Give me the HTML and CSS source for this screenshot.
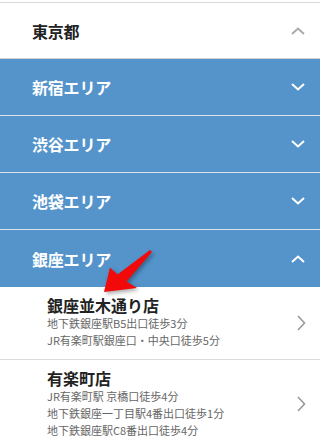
FILE: index.html
```html
<!DOCTYPE html>
<html lang="ja">
<head>
<meta charset="utf-8">
<link rel="stylesheet" href="styles.css">
</head>
<body>
<div class="page">
  <div class="pref">
    <span class="label">東京都</span>
    <svg class="chev up gray" viewBox="0 0 14 8"><path d="M1 7 L7 1.5 L13 7"/></svg>
  </div>
  <div class="area">
    <span class="label">新宿エリア</span>
    <svg class="chev" viewBox="0 0 14 8"><path d="M1 1 L7 6.5 L13 1"/></svg>
  </div>
  <div class="area">
    <span class="label">渋谷エリア</span>
    <svg class="chev" viewBox="0 0 14 8"><path d="M1 1 L7 6.5 L13 1"/></svg>
  </div>
  <div class="area">
    <span class="label">池袋エリア</span>
    <svg class="chev" viewBox="0 0 14 8"><path d="M1 1 L7 6.5 L13 1"/></svg>
  </div>
  <div class="area open">
    <span class="label">銀座エリア</span>
    <svg class="chev" viewBox="0 0 14 8"><path d="M1 7 L7 1.5 L13 7"/></svg>
  </div>
  <div class="shop">
    <div class="info">
      <div class="name">銀座並木通り店</div>
      <div class="access">地下鉄銀座駅B5出口徒歩3分</div>
      <div class="access">JR有楽町駅銀座口・中央口徒歩5分</div>
    </div>
    <svg class="arrow-r" viewBox="0 0 9 16"><path d="M1 1 L7.5 8 L1 15"/></svg>
  </div>
  <div class="shop">
    <div class="info">
      <div class="name">有楽町店</div>
      <div class="access">JR有楽町駅 京橋口徒歩4分</div>
      <div class="access">地下鉄銀座一丁目駅4番出口徒歩1分</div>
      <div class="access">地下鉄銀座駅C8番出口徒歩4分</div>
    </div>
    <svg class="arrow-r" viewBox="0 0 9 16"><path d="M1 1 L7.5 8 L1 15"/></svg>
  </div>
  <svg class="pointer" viewBox="0 0 320 448" width="320" height="448">
    <polygon points="150,250 117.5,274.5 110,267.5 104,292 137,288 126.5,281.5 152,252"/>
  </svg>
</div>
</body>
</html>
```

FILE: styles.css
```css
* { box-sizing: border-box; }
html, body { margin: 0; padding: 0; background: #fff; }
body {
  font-family: "Noto Sans CJK JP", "Noto Sans", sans-serif;
  width: 320px;
  height: 448px;
  overflow: hidden;
}
.page {
  position: relative;
  padding-top: 2px;
}
.pref, .area {
  display: flex;
  align-items: center;
  justify-content: space-between;
  height: 57px;
  padding: 0 15px 0 32px;
}
.pref {
  border-top: 1px solid #d9d9d9;
  border-bottom: 1px solid #cfcfcf;
  background: #fff;
  color: #222;
}
.area {
  background: #5494cb;
  color: #fff;
  border-bottom: 1px solid #d8e3ec;
}
.area.open {
  border-bottom: none;
  height: 57px;
}
.label {
  font-size: 16px;
  font-weight: 700;
  line-height: 20px;
  letter-spacing: -0.2px;
}
.chev {
  width: 14px;
  height: 8px;
  fill: none;
  stroke: #fff;
  stroke-width: 2;
}
.chev.gray { stroke: #aaa; }
.shop {
  display: flex;
  align-items: center;
  justify-content: space-between;
  padding: 9px 14px 10px 47px;
  border-bottom: 1px solid #dcdcdc;
}
.name {
  font-size: 16px;
  font-weight: 700;
  line-height: 19px;
  color: #222;
}
.access {
  font-size: 11px;
  line-height: 17px;
  color: #666;
}
.arrow-r {
  width: 9px;
  height: 16px;
  fill: none;
  stroke: #999;
  stroke-width: 1.6;
}
.pointer {
  position: absolute;
  left: 0;
  top: 0;
  pointer-events: none;
}
.pointer polygon {
  fill: #f20a0a;
  filter: drop-shadow(2px 2px 2px rgba(0,0,0,0.35));
}
```
